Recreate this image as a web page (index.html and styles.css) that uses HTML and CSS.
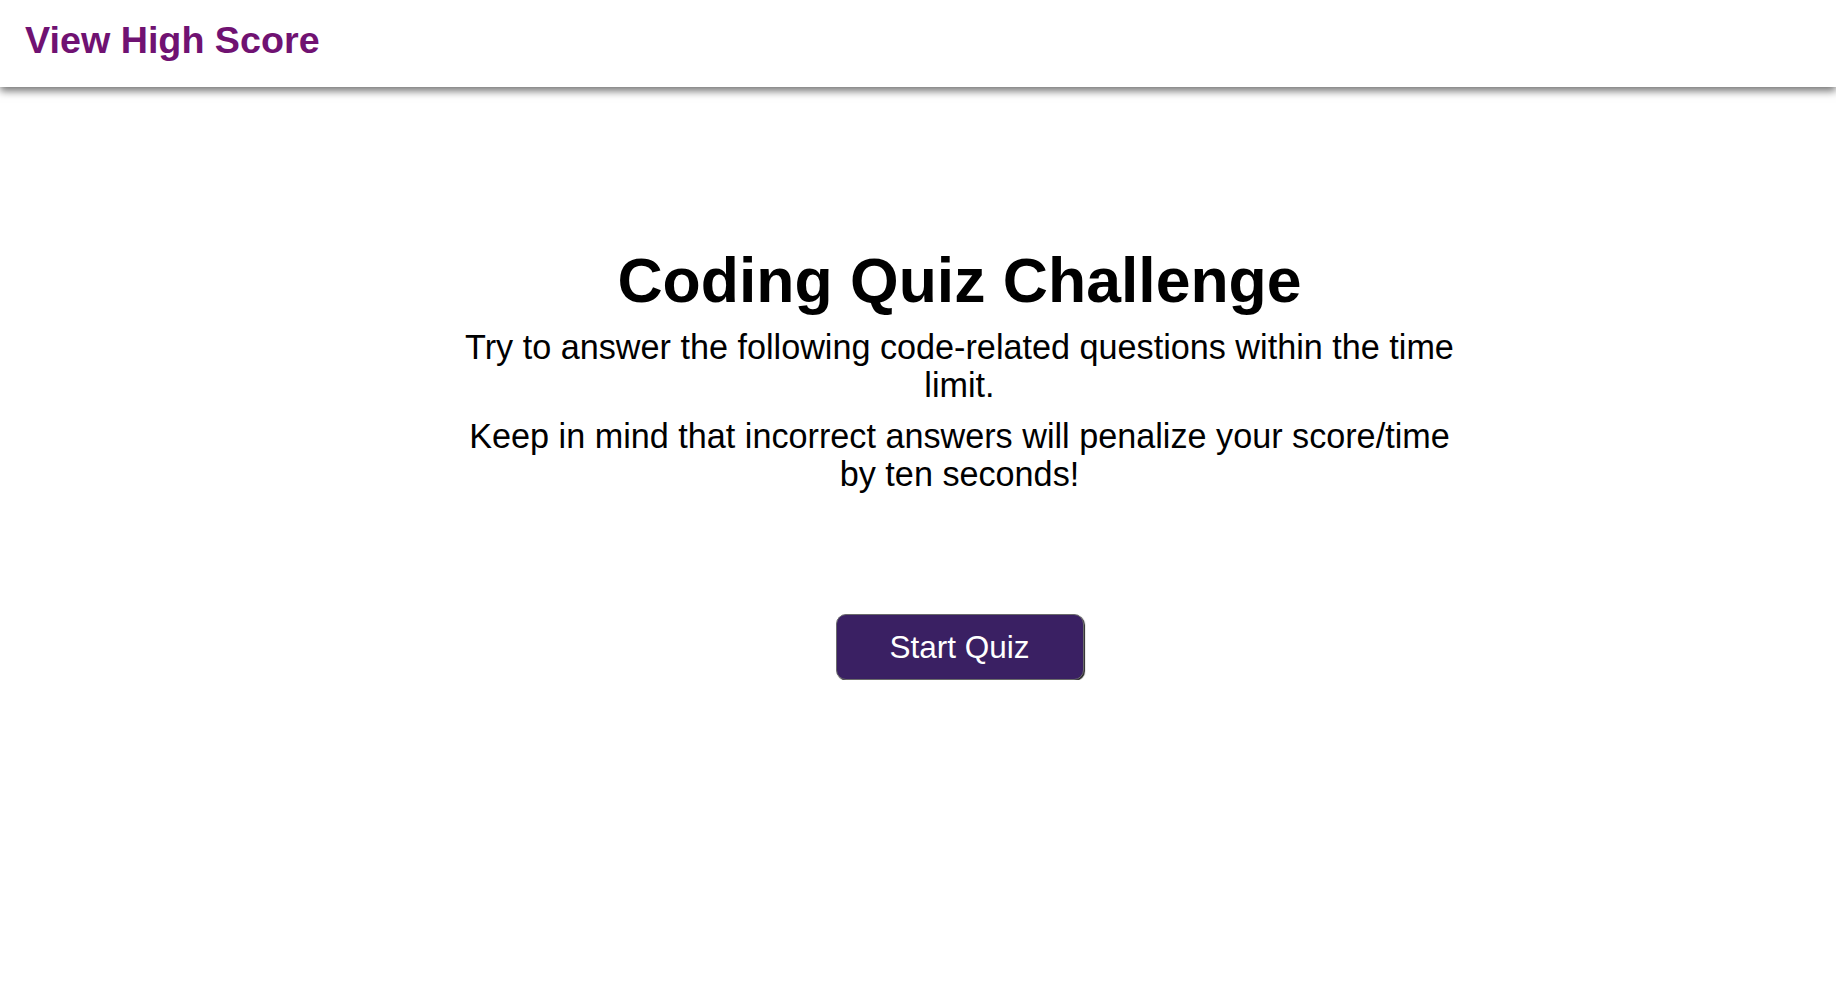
FILE: index.html
```html
<!DOCTYPE html>
<html lang="en">
<head>
<meta charset="utf-8">
<title>Coding Quiz Challenge</title>
<link rel="stylesheet" href="styles.css">
</head>
<body>
<header class="topbar">
  <a class="highscore" href="#">View High Score</a>
</header>
<main class="quiz">
  <h1 class="title">Coding Quiz Challenge</h1>
  <p class="intro">Try to answer the following code-related questions within the time limit.</p>
  <p class="intro">Keep in mind that incorrect answers will penalize your score/time by ten seconds!</p>
  <button class="start" type="button">Start Quiz</button>
</main>
</body>
</html>
```
FILE: styles.css
```css
html, body {
  margin: 0;
  padding: 0;
  background: #ffffff;
  font-family: "Liberation Sans", Arial, sans-serif;
  color: #000;
}

.topbar {
  height: 87px;
  display: flex;
  align-items: center;
  padding-left: 25px;
  background: #fff;
  box-shadow: 0 4px 8px rgba(0, 0, 0, 0.55);
  position: relative;
  z-index: 1;
}

.highscore {
  font-size: 37.7px;
  font-weight: bold;
  color: #701272;
  text-decoration: none;
  margin-top: -6px;
}

.quiz {
  width: 1010px;
  margin: 0 auto;
  padding: 157px 0 0 83px;
  display: flex;
  flex-direction: column;
  align-items: center;
  text-align: center;
}

.title {
  font-size: 62.5px;
  font-weight: bold;
  margin: 0 0 13px;
  line-height: normal;
}

.intro {
  font-size: 34.2px;
  margin: 0 0 14px;
  line-height: 37.5px;
}

.start {
  margin-top: 107px;
  width: 248px;
  height: 66px;
  background: #3a2063;
  color: #fff;
  font-family: "Liberation Sans", Arial, sans-serif;
  font-size: 31.5px;
  border: 1px solid #6b6b6b;
  border-radius: 10px;
  box-shadow: 1px 1px 1px #222;
  cursor: pointer;
}
```
